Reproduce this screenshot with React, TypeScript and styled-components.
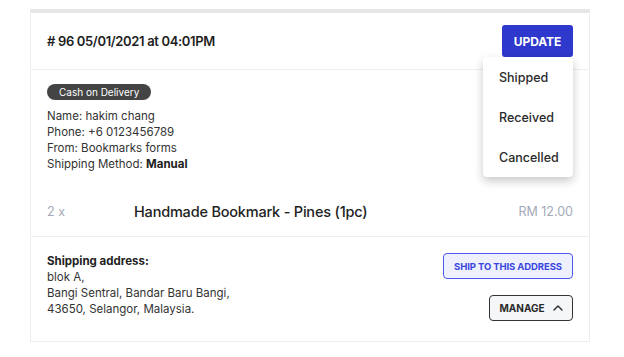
import React from "react";
import styled, { createGlobalStyle } from "styled-components";

const Global = createGlobalStyle`
  html, body { margin: 0; padding: 0; background: #fff; }
  body { font-family: Inter, "Noto Sans", sans-serif; color: #222; }
`;

const Page = styled.div`
  padding: 9px 0 0 30px;
`;

const Card = styled.div`
  width: 560px;
  box-sizing: border-box;
  border: 1px solid #eeeeee;
  border-top: 4px solid #e6e6e6;
  background: #fff;
`;

const Header = styled.div`
  display: flex;
  align-items: center;
  justify-content: space-between;
  height: 56px;
  padding: 0 16px;
  border-bottom: 1px solid #efefef;
  position: relative;
`;

const Title = styled.div`
  font-size: 13px;
  font-weight: 600;
  color: #1e1e1e;
  letter-spacing: -0.35px;
`;

const UpdateButton = styled.button`
  height: 32px;
  width: 71px;
  border: none;
  border-radius: 3px;
  background: #2f38cc;
  color: #fff;
  font-family: inherit;
  font-size: 12px;
  font-weight: 700;
  letter-spacing: -0.1px;
  padding: 0;
`;

const Menu = styled.div`
  position: absolute;
  right: 16px;
  top: 44px;
  width: 90px;
  background: #fff;
  border-radius: 4px;
  box-shadow: 0 4px 10px rgba(0, 0, 0, 0.22);
  z-index: 2;
`;

const MenuItem = styled.div`
  height: 40px;
  display: flex;
  align-items: center;
  padding-left: 16px;
  font-size: 12.5px;
  font-weight: 500;
  color: #2a2a2a;
`;

const Info = styled.div`
  padding: 14px 16px 0;
`;

const Badge = styled.div`
  width: fit-content;
  background: #444;
  color: #fff;
  font-size: 10px;
  line-height: 16px;
  height: 16px;
  padding: 0 12px;
  border-radius: 8px;
  margin-bottom: 8px;
`;

const InfoLine = styled.div`
  font-size: 11.5px;
  line-height: 16px;
  color: #333;
`;

const Strong = styled.b`
  font-weight: 700;
  color: #222;
`;

const ItemRow = styled.div`
  display: grid;
  grid-template-columns: 87px 1fr auto;
  align-items: center;
  line-height: 16px;
  padding: 32px 16px 16px;
  border-bottom: 1px solid #efefef;
`;

const Qty = styled.div`
  font-size: 12.5px;
  color: #a3aab9;
`;

const ItemName = styled.div`
  font-size: 14.5px;
  font-weight: 500;
  color: #222;
  letter-spacing: -0.2px;
`;

const Price = styled.div`
  font-size: 12.5px;
  color: #a3aab9;
`;

const Address = styled.div`
  display: flex;
  justify-content: space-between;
  padding: 16px 16px 20px;
`;

const AddrText = styled.div``;

const AddrLabel = styled.div`
  font-size: 11.5px;
  line-height: 16px;
  font-weight: 700;
  color: #222;
`;

const Actions = styled.div`
  display: flex;
  flex-direction: column;
  align-items: flex-end;
  gap: 16px;
`;

const ShipButton = styled.button`
  height: 26px;
  width: 130px;
  border: 1px solid #4d58ec;
  border-radius: 4px;
  background: #eef0fd;
  color: #3a46e0;
  font-family: inherit;
  font-size: 9.5px;
  font-weight: 700;
  padding: 0;
  letter-spacing: -0.1px;
`;

const ManageButton = styled.button`
  height: 26px;
  width: 84px;
  border: 1px solid #333;
  border-radius: 4px;
  background: #f5f6f8;
  color: #2a2a2a;
  font-family: inherit;
  font-size: 10px;
  font-weight: 700;
  padding: 0;
  display: flex;
  align-items: center;
  justify-content: center;
  gap: 8px;
`;

export default function App() {
  return (
    <>
      <Global />
      <Page>
        <Card>
          <Header>
            <Title># 96 05/01/2021 at 04:01PM</Title>
            <UpdateButton>UPDATE</UpdateButton>
            <Menu>
              <MenuItem>Shipped</MenuItem>
              <MenuItem>Received</MenuItem>
              <MenuItem>Cancelled</MenuItem>
            </Menu>
          </Header>
          <Info>
            <Badge>Cash on Delivery</Badge>
            <InfoLine>Name: hakim chang</InfoLine>
            <InfoLine>Phone: +6 0123456789</InfoLine>
            <InfoLine>From: Bookmarks forms</InfoLine>
            <InfoLine>
              Shipping Method: <Strong>Manual</Strong>
            </InfoLine>
          </Info>
          <ItemRow>
            <Qty>2 x</Qty>
            <ItemName>Handmade Bookmark - Pines (1pc)</ItemName>
            <Price>RM 12.00</Price>
          </ItemRow>
          <Address>
            <AddrText>
              <AddrLabel>Shipping address:</AddrLabel>
              <InfoLine>blok A,</InfoLine>
              <InfoLine>Bangi Sentral, Bandar Baru Bangi,</InfoLine>
              <InfoLine>43650, Selangor, Malaysia.</InfoLine>
            </AddrText>
            <Actions>
              <ShipButton>SHIP TO THIS ADDRESS</ShipButton>
              <ManageButton>
                MANAGE
                <svg width="10" height="6" viewBox="0 0 10 6" fill="none">
                  <path d="M1 5L5 1L9 5" stroke="#2a2a2a" strokeWidth="1.4" strokeLinecap="round" strokeLinejoin="round" />
                </svg>
              </ManageButton>
            </Actions>
          </Address>
        </Card>
      </Page>
    </>
  );
}
